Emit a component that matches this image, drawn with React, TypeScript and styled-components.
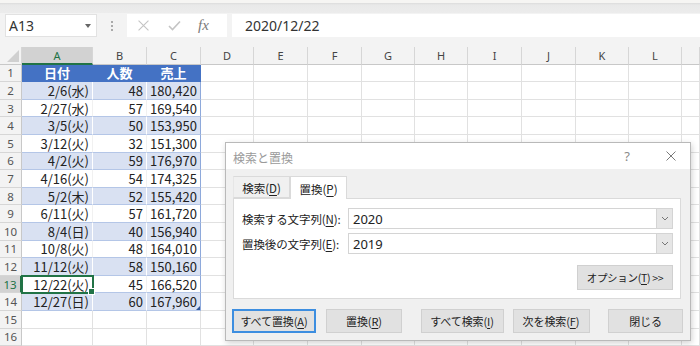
import * as React from "react";
import styled, { createGlobalStyle, css } from "styled-components";

const GlobalStyle = createGlobalStyle`
	html, body {
		margin: 0;
		padding: 0;
		background: #ffffff;
	}
	body {
		font-family: "Noto Sans CJK JP", "Noto Sans", sans-serif;
		color: #222;
	}
	* {
		box-sizing: border-box;
	}
`;

const Page = styled.div`
	position: relative;
	width: 700px;
	height: 346px;
	overflow: hidden;
	background: #f3f3f3;
	display: flex;
	flex-direction: column;
`;

const RibbonEdge = styled.div`
	height: 13px;
	background: linear-gradient(#f6f5f3 0, #f6f5f3 3px, #dcdcdc 3px, #e9e9e9 5px, #ececec 13px);
	flex-shrink: 0;
`;

const FormulaRow = styled.div`
	height: 25px;
	display: flex;
	align-items: center;
	padding: 1px 0 1px 5px;
	flex-shrink: 0;
`;

const NameBox = styled.div`
	width: 92px;
	height: 23px;
	background: #fff;
	border: 1px solid #e2e2e2;
	display: flex;
	align-items: center;
	justify-content: space-between;
	padding: 0 5px 0 3px;
	font-family: "Noto Sans", sans-serif;
	font-size: 14px;
	color: #333;
`;

const Caret = styled.span`
	width: 0;
	height: 0;
	border-left: 3.5px solid transparent;
	border-right: 3.5px solid transparent;
	border-top: 4px solid #666;
`;

const Dots = styled.div`
	width: 30px;
	display: flex;
	flex-direction: column;
	align-items: center;
	gap: 2px;
	span {
		width: 2px;
		height: 2px;
		background: #aaa;
	}
`;

const FxBox = styled.div`
	width: 100px;
	height: 23px;
	background: #fff;
	display: flex;
	align-items: center;
	padding-left: 11px;
	gap: 19px;
`;

const Fx = styled.span`
	font-family: "Liberation Serif", serif;
	font-style: italic;
	font-size: 15px;
	color: #7a7a7a;
	margin-left: -2px;
`;

const FormulaInput = styled.div`
	flex: 1;
	height: 23px;
	margin-left: 5px;
	background: #fff;
	padding-left: 13px;
	display: flex;
	align-items: center;
	font-family: "Noto Sans", sans-serif;
	font-size: 14px;
	color: #333;
`;

const Spacer = styled.div`
	height: 9px;
	flex-shrink: 0;
`;

const Sheet = styled.div`
	display: grid;
	grid-template-columns: 22px 71px 54px 54px 53px 54px 54px 53px 53px 54px 54px 53px 53px 18px;
	grid-template-rows: 17.7px repeat(16, 17.6px);
	background: #fff;
`;

const ColHead = styled.div<{ $sel?: boolean }>`
	background: ${(p) => (p.$sel ? "#d2d2d2" : "#f3f3f3")};
	border-right: 1px solid #d6d6d6;
	border-bottom: ${(p) => (p.$sel ? "2px solid #217346" : "1px solid #c8c8c8")};
	font-family: "Noto Sans", sans-serif;
	font-size: 11px;
	color: ${(p) => (p.$sel ? "#217346" : "#444")};
	display: flex;
	align-items: center;
	justify-content: center;
	padding-top: ${(p) => (p.$sel ? "1px" : "0")};
`;

const Corner = styled.div`
	position: relative;
	background: #f3f3f3;
	border-right: 1px solid #d6d6d6;
	border-bottom: 1px solid #c8c8c8;
	&::after {
		content: "";
		position: absolute;
		right: 2px;
		bottom: 2px;
		border-left: 12px solid transparent;
		border-bottom: 12px solid #d0d0d0;
	}
`;

const RowHead = styled.div<{ $sel?: boolean }>`
	background: ${(p) => (p.$sel ? "#d2d2d2" : "#f3f3f3")};
	border-right: ${(p) => (p.$sel ? "2px solid #217346" : "1px solid #c8c8c8")};
	border-bottom: 1px solid #d6d6d6;
	font-family: "Noto Sans", sans-serif;
	font-size: 11.5px;
	color: ${(p) => (p.$sel ? "#217346" : "#555")};
	display: flex;
	align-items: center;
	justify-content: center;
`;

type Tone = "plain" | "head" | "band" | "light";

const Cell = styled.div<{ $tone: Tone; $align?: "left" | "center" | "right"; $edge?: boolean; $sel?: boolean; $last?: boolean }>`
	position: relative;
	font-size: 13px;
	line-height: 1;
	padding: 0 3px 0 3px;
	display: flex;
	align-items: center;
	justify-content: ${(p) => (p.$align === "center" ? "center" : p.$align === "right" ? "flex-end" : "flex-start")};
	white-space: nowrap;
	border-right: 1px solid #e1e1e1;
	border-bottom: 1px solid #e1e1e1;
	${(p) =>
		p.$tone === "head" &&
		css`
			background: #4472c4;
			color: #fff;
			font-weight: 700;
			border-right-color: #4472c4;
			border-bottom-color: #4472c4;
		`}
	${(p) =>
		p.$tone === "band" &&
		css`
			background: #d9e1f2;
			border-right-color: #ffffff;
			border-bottom-color: #b4c6e7;
		`}
	${(p) =>
		p.$tone === "light" &&
		css`
			background: #fff;
			border-right-color: #f1f1f1;
			border-bottom-color: #b4c6e7;
		`}
	${(p) =>
		p.$edge &&
		css`
			border-right-color: #8ea9db;
		`}
	${(p) =>
		p.$sel &&
		css`
			outline: 2px solid #217346;
			outline-offset: -1px;
			z-index: 2;
			&::after {
				content: "";
				position: absolute;
				right: -3px;
				bottom: -3px;
				width: 5px;
				height: 5px;
				background: #217346;
				border: 1px solid #fff;
			}
		`}
	${(p) =>
		p.$last &&
		css`
			&::after {
				content: "";
				position: absolute;
				right: 0;
				bottom: 0;
				border-left: 4px solid transparent;
				border-bottom: 4px solid #2f5597;
			}
		`}
`;

/* dialog */

const Dialog = styled.div`
	position: absolute;
	left: 225px;
	top: 142px;
	width: 466px;
	height: 199px;
	background: #f0f0f0;
	border: 1px solid #b9b9b9;
	box-shadow: 1px 2px 6px rgba(0, 0, 0, 0.18);
	display: flex;
	flex-direction: column;
	font-size: 11.5px;
	color: #222;
`;

const TitleBar = styled.div`
	height: 26px;
	background: #fff;
	display: flex;
	align-items: center;
	padding: 0 14px 0 7px;
	font-size: 12px;
	color: #9a9a9a;
`;

const Title = styled.span`
	flex: 1;
	margin-top: 2px;
`;

const Help = styled.span`
	font-family: "Noto Sans", sans-serif;
	font-size: 13px;
	color: #8a8a8a;
	margin-right: 36px;
`;

const DialogBody = styled.div`
	flex: 1;
	padding: 7px 9px 0 7px;
	display: flex;
	flex-direction: column;
`;

const Tabs = styled.div`
	display: flex;
	height: 22px;
	position: relative;
	z-index: 1;
`;

const Tab = styled.div<{ $active?: boolean }>`
	width: 57px;
	height: ${(p) => (p.$active ? "23px" : "22px")};
	display: flex;
	align-items: center;
	justify-content: center;
	padding-top: 1px;
	background: ${(p) => (p.$active ? "#fff" : "#f0f0f0")};
	border: 1px solid #dadada;
	border-bottom: ${(p) => (p.$active ? "none" : "1px solid #dadada")};
	border-left: ${(p) => (p.$active ? "1px solid #dadada" : "1px solid #e6e6e6")};
`;

const Panel = styled.div`
	height: 101px;
	background: #fff;
	border: 1px solid #dadada;
	padding: 9px 7px 0 7px;
	display: flex;
	flex-direction: column;
	gap: 4px;
`;

const FieldRow = styled.div`
	display: flex;
	align-items: center;
	height: 21px;
`;

const Label = styled.span`
	width: 107px;
	padding-left: 1px;
	white-space: nowrap;
	letter-spacing: -0.1px;
`;

const Combo = styled.div`
	flex: 1;
	height: 21px;
	border: 1px solid #d4d4d4;
	display: flex;
	align-items: stretch;
	background: #fff;
`;

const ComboText = styled.span`
	flex: 1;
	padding-left: 4px;
	display: flex;
	align-items: center;
	font-family: "Noto Sans", sans-serif;
	font-size: 13px;
`;

const ComboButton = styled.span`
	width: 16px;
	background: #e6e6e6;
	border-left: 1px solid #d4d4d4;
	display: flex;
	align-items: center;
	justify-content: center;
`;

const OptionRow = styled.div`
	display: flex;
	justify-content: flex-end;
	margin-top: 7px;
`;

const Button = styled.div<{ $w: number; $h?: number; $focus?: boolean; $tight?: boolean }>`
	width: ${(p) => p.$w}px;
	height: ${(p) => p.$h ?? 24}px;
	background: #e1e1e1;
	border: 1px solid ${(p) => (p.$focus ? "#3d8ee0" : "#d0d0d0")};
	box-shadow: ${(p) => (p.$focus ? "inset 0 0 0 1px #3d8ee0" : "none")};
	display: flex;
	align-items: center;
	justify-content: center;
	white-space: nowrap;
	font-size: ${(p) => (p.$tight ? "10.5px" : "11px")};
	letter-spacing: ${(p) => (p.$tight ? "-0.3px" : "-0.1px")};
	color: #222;
`;

const ButtonRow = styled.div`
	display: flex;
	justify-content: space-between;
	margin: 10px -2px 0 -1px;
`;

const ButtonGroup = styled.div<{ $gap: number }>`
	display: flex;
	gap: ${(p) => p.$gap}px;
`;

const U = styled.span`
	text-decoration: underline;
	text-underline-offset: 2px;
`;

const Chevron = () => (
	<svg width="8" height="5" viewBox="0 0 8 5">
		<path d="M1 1 L4 4 L7 1" fill="none" stroke="#777" strokeWidth="1" />
	</svg>
);

const CloseIcon = ({ size, color }: { size: number; color: string }) => (
	<svg width={size} height={size} viewBox="0 0 10 10">
		<path d="M0.5 0.5 L9.5 9.5 M9.5 0.5 L0.5 9.5" stroke={color} strokeWidth="1" fill="none" />
	</svg>
);

const CheckIcon = () => (
	<svg width="13" height="11" viewBox="0 0 13 11">
		<path d="M1 6 L4.5 9.5 L12 1.5" stroke="#c4c4c4" strokeWidth="1.6" fill="none" />
	</svg>
);

const columns = ["A", "B", "C", "D", "E", "F", "G", "H", "I", "J", "K", "L", ""];

const rows: [string, string, string][] = [
	["日付", "人数", "売上"],
	["2/6(水)", "48", "180,420"],
	["2/27(水)", "57", "169,540"],
	["3/5(火)", "50", "153,950"],
	["3/12(火)", "32", "151,300"],
	["4/2(火)", "59", "176,970"],
	["4/16(火)", "54", "174,325"],
	["5/2(木)", "52", "155,420"],
	["6/11(火)", "57", "161,720"],
	["8/4(日)", "40", "156,940"],
	["10/8(火)", "48", "164,010"],
	["11/12(火)", "58", "150,160"],
	["12/22(火)", "45", "166,520"],
	["12/27(日)", "60", "167,960"],
];

export default function App() {
	const renderRow = (r: number) => {
		const data = rows[r - 1];
		const cells: JSX.Element[] = [];
		cells.push(
			<RowHead key="h" $sel={r === 13}>
				{r}
			</RowHead>
		);
		columns.forEach((c, ci) => {
			if (data && ci < 3) {
				const tone: Tone = r === 1 ? "head" : r % 2 === 0 ? "band" : "light";
				cells.push(
					<Cell
						key={ci}
						$tone={tone}
						$align={r === 1 ? "center" : "right"}
						$edge={ci === 2 && r > 1}
						$sel={r === 13 && ci === 0}
						$last={r === 14 && ci === 2}
					>
						{data[ci]}
					</Cell>
				);
			} else {
				cells.push(<Cell key={ci} $tone="plain" />);
			}
		});
		return cells;
	};

	return (
		<Page>
			<GlobalStyle />
			<RibbonEdge />
			<FormulaRow>
				<NameBox>
					A13
					<Caret />
				</NameBox>
				<Dots>
					<span />
					<span />
					<span />
				</Dots>
				<FxBox>
					<CloseIcon size={11} color="#c4c4c4" />
					<CheckIcon />
					<Fx>fx</Fx>
				</FxBox>
				<FormulaInput>2020/12/22</FormulaInput>
			</FormulaRow>
			<Spacer />
			<Sheet>
				<Corner />
				{columns.map((c, i) => (
					<ColHead key={i} $sel={c === "A"}>
						{c}
					</ColHead>
				))}
				{Array.from({ length: 16 }, (_, i) => (
					<React.Fragment key={i}>{renderRow(i + 1)}</React.Fragment>
				))}
			</Sheet>

			<Dialog>
				<TitleBar>
					<Title>検索と置換</Title>
					<Help>?</Help>
					<CloseIcon size={10} color="#7a7a7a" />
				</TitleBar>
				<DialogBody>
					<Tabs>
						<Tab>
							検索(<U>D</U>)
						</Tab>
						<Tab $active>
							置換(<U>P</U>)
						</Tab>
					</Tabs>
					<Panel>
						<FieldRow>
							<Label>
								検索する文字列(<U>N</U>):
							</Label>
							<Combo>
								<ComboText>2020</ComboText>
								<ComboButton>
									<Chevron />
								</ComboButton>
							</Combo>
						</FieldRow>
						<FieldRow>
							<Label>
								置換後の文字列(<U>E</U>):
							</Label>
							<Combo>
								<ComboText>2019</ComboText>
								<ComboButton>
									<Chevron />
								</ComboButton>
							</Combo>
						</FieldRow>
						<OptionRow>
							<Button $w={96} $h={25} $tight>
								オプション(<U>T</U>)&nbsp;&gt;&gt;
							</Button>
						</OptionRow>
					</Panel>
					<ButtonRow>
						<ButtonGroup $gap={10}>
							<Button $w={84} $focus>
								すべて置換(<U>A</U>)
							</Button>
							<Button $w={76}>
								置換(<U>R</U>)
							</Button>
						</ButtonGroup>
						<ButtonGroup $gap={9}>
							<Button $w={83}>
								すべて検索(<U>I</U>)
							</Button>
							<Button $w={77}>
								次を検索(<U>F</U>)
							</Button>
						</ButtonGroup>
						<Button $w={75}>閉じる</Button>
					</ButtonRow>
				</DialogBody>
			</Dialog>
		</Page>
	);
}
